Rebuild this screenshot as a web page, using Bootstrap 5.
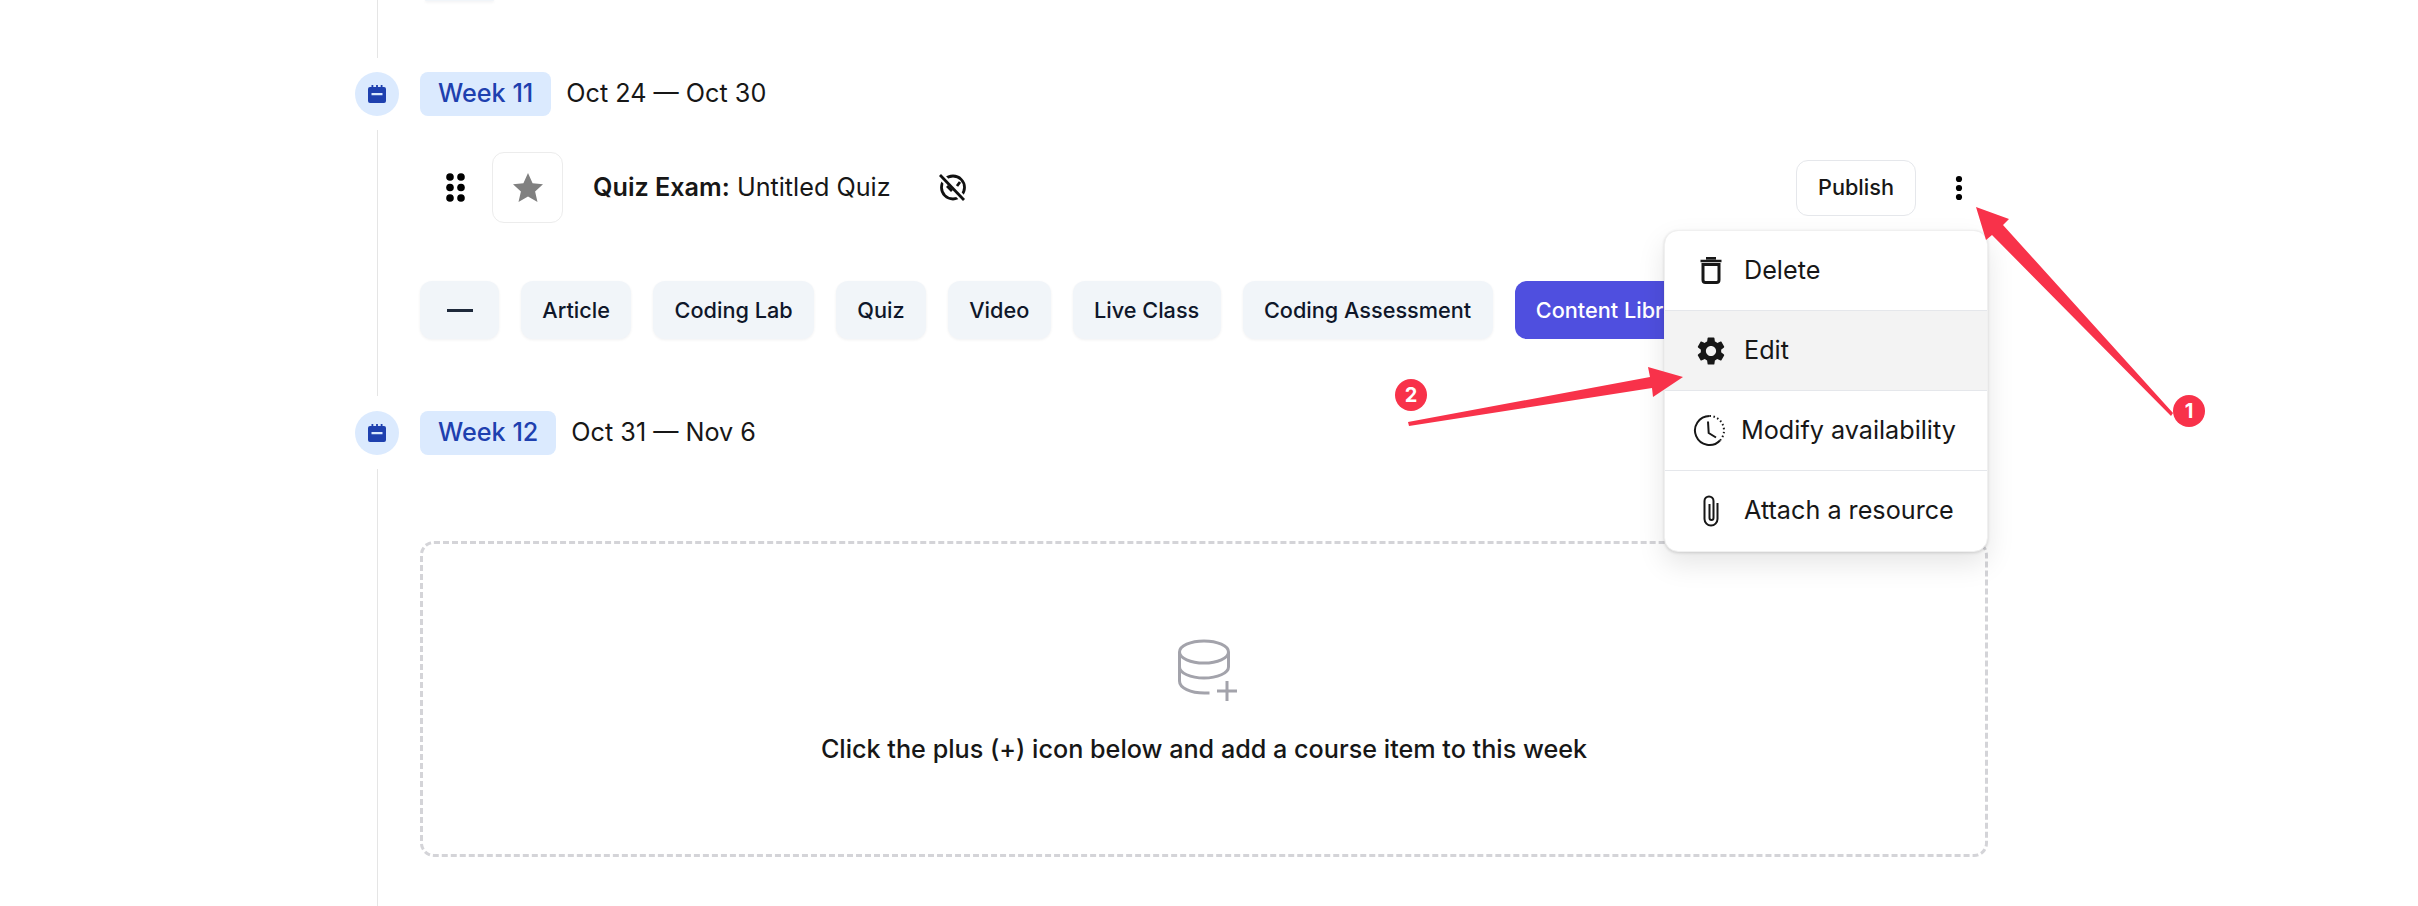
<!DOCTYPE html>
<html lang="en">
<head>
    <meta charset="UTF-8">
    <meta name="viewport" content="width=device-width, initial-scale=1.0">
    <title>Course Timeline</title>

    <!-- Bootstrap CSS -->
    <link href="https://cdn.jsdelivr.net/npm/bootstrap@5.3.0/dist/css/bootstrap.min.css" rel="stylesheet">

    <style>
        html, body {
            height: 906px;
            overflow: hidden;
        }
        body {
            background-color: #ffffff;
            color: #171717;
            font-family: "Inter", "Liberation Sans", sans-serif;
        }
        .page-wrap {
            position: relative;
            width: 2418px;
            height: 906px;
            padding-left: 355px;
        }
        .timeline {
            width: 1633px;
        }
        .rail {
            width: 44px;
            margin-right: 21px;
            flex-shrink: 0;
        }
        .rail-line {
            width: 1px;
            flex-grow: 1;
            background-color: #e5e5e5;
        }
        .intro-line { margin-bottom: 14px; }
        .week-line { margin: 14px 0 15px; }
        .week-line.last-line { margin-bottom: 0; }
        .week-dot {
            width: 44px;
            height: 44px;
            flex-shrink: 0;
            border-radius: 50%;
            background-color: #dbeafe;
            color: #1e40af;
        }
        .intro-block { height: 72px; }
        .week-eleven { height: 339px; }
        .week-twelve { height: 495px; }
        .prev-chip {
            width: 69px;
            height: 1px;
            margin-left: 5px;
            background-color: #f1f5f9;
            box-shadow: 0 1px 3px rgba(15, 23, 42, .12);
        }
        .week-head {
            height: 44px;
            font-size: 25.2px;
        }
        .week-tag {
            height: 44px;
            padding: 0 18px;
            border-radius: 8px;
            background-color: #dbeafe;
            color: #1e40af;
            font-weight: 500;
        }
        .week-date { margin-left: 15px; }
        .quiz-row {
            height: 71px;
            margin-top: 36px;
            padding-left: 26px;
            font-size: 25.2px;
        }
        .grip { margin-right: 27px; }
        .star-box {
            width: 71px;
            height: 71px;
            margin-right: 30px;
            border: 1px solid #ececec;
            border-radius: 12px;
        }
        .quiz-title strong { font-weight: 600; }
        .hidden-mark { margin-left: 48px; }
        .publish-btn {
            height: 56px;
            padding: 0 21px;
            margin-right: 14px;
            background-color: #fff;
            border: 1px solid #e5e7eb;
            border-radius: 12px;
            color: #171717;
            font-size: 21.7px;
            font-weight: 500;
        }
        .kebab-btn {
            width: 58px;
            height: 56px;
            padding: 0;
            background: none;
            border: 0;
        }
        .row-menu {
            top: 70.5px;
            right: 0;
            width: 324px;
            padding: 0;
            overflow: hidden;
            border: 1px solid #f0f0f0;
            border-radius: 14px;
            font-size: 25.2px;
            box-shadow: 0 1px 3px rgba(0, 0, 0, .14), 0 12px 28px rgba(0, 0, 0, .1);
        }
        .row-menu .dropdown-item {
            height: 80px;
            padding: 0;
            color: #171717;
            border-bottom: 1px solid #e5e7eb;
        }
        .row-menu li:last-child .dropdown-item { border-bottom: 0; }
        .row-menu .dropdown-item.active-row { background-color: #f3f3f3; }
        .menu-ico {
            width: 79px;
            padding-left: 13px;
            justify-content: center;
        }
        .menu-ico.narrow {
            width: 76px;
            padding-left: 12px;
        }
        .add-row {
            height: 58px;
            margin-top: 58px;
            font-size: 21.7px;
            gap: 22px;
        }
        .add-chip {
            height: 58px;
            padding: 0 21.3px;
            background-color: #f1f5f9;
            border: 0;
            border-radius: 12px;
            color: #0f172a;
            font-weight: 500;
            white-space: nowrap;
            box-shadow: 0 1px 3px rgba(15, 23, 42, .06);
        }
        .add-chip.dash { width: 79px; padding: 0; }
        .add-chip.lib {
            background-color: #4f4fdf;
            color: #fff;
            box-shadow: none;
        }
        .dash-line {
            width: 26px;
            height: 3px;
            background-color: #1e293b;
        }
        .empty-box {
            height: 316px;
            margin-top: 86px;
            padding-top: 95px;
            border: 3px dashed #d4d4d8;
            border-radius: 14px;
        }
        .empty-icon { margin-left: 10px; }
        .empty-box p {
            margin: 28px 0 0;
            font-size: 25.2px;
            font-weight: 500;
        }
        .arrow-layer {
            position: absolute;
            left: 0;
            top: 0;
            z-index: 1100;
            pointer-events: none;
        }
        .arrow-layer text {
            fill: #fff;
            font-family: "Inter", "Liberation Sans", sans-serif;
            font-size: 20px;
            font-weight: 700;
        }
    </style>
</head>
<body>
    <div class="page-wrap">
        <div class="timeline">

            <!-- Previous week, cut off by the top edge -->
            <section class="d-flex intro-block">
                <div class="rail d-flex flex-column align-items-center">
                    <div class="rail-line intro-line"></div>
                </div>
                <div class="prev-chip rounded-bottom"></div>
            </section>

            <!-- Week 11 -->
            <section class="d-flex week-eleven">
                <div class="rail d-flex flex-column align-items-center">
                    <div class="week-dot d-flex align-items-center justify-content-center">
                        <svg width="18" height="18" viewBox="0 0 18 18"><path fill="currentColor" d="M3.500 0h1.800v2h2.800V0h1.800v2h2.800V0h1.800v2H16a2 2 0 0 1 2 2v2.800H0V4a2 2 0 0 1 2-2h1.500zM0 6.800h18V16a2 2 0 0 1-2 2H2a2 2 0 0 1-2-2zm3.500 1.200v2.200h11V8z"/></svg>
                    </div>
                    <div class="rail-line week-line"></div>
                </div>
                <div class="flex-grow-1">
                    <div class="week-head d-flex align-items-center">
                        <span class="week-tag d-flex align-items-center">Week 11</span>
                        <span class="week-date">Oct 24 — Oct 30</span>
                    </div>

                    <div class="quiz-row d-flex align-items-center">
                        <svg class="grip" width="19" height="29" viewBox="0 0 19 29" fill="#000"><circle cx="4" cy="4" r="3.800"/><circle cx="15" cy="4" r="3.800"/><circle cx="4" cy="14.500" r="3.800"/><circle cx="15" cy="14.500" r="3.800"/><circle cx="4" cy="25" r="3.800"/><circle cx="15" cy="25" r="3.800"/></svg>
                        <div class="star-box d-flex align-items-center justify-content-center">
                            <svg width="30" height="29" viewBox="0 0 30 29"><path fill="#808080" d="M15 0l4.600 10.300 10.400 1-7.900 7.200 2.400 10.500L15 23.500 5.500 29l2.400-10.500L0 11.300l10.400-1z"/></svg>
                        </div>
                        <span class="quiz-title"><strong>Quiz Exam:</strong> Untitled Quiz</span>
                        <svg class="hidden-mark" width="28" height="29" viewBox="0 0 28 29" fill="none" stroke-width="2.800">
                            <circle cx="14" cy="14.500" r="11.500" stroke="#111"/>
                            <path d="M1 2l24 25" stroke="#fff" stroke-width="7"/>
                            <path d="M1 2l24 25" stroke="#111"/>
                            <path d="M18 13l3-4M8 13l5 5" stroke="#111"/>
                        </svg>

                        <button type="button" class="publish-btn ms-auto">Publish</button>
                        <div class="dropdown">
                            <button type="button" class="kebab-btn d-flex align-items-center justify-content-center">
                                <svg width="8" height="26" viewBox="0 0 8 26" fill="#000"><circle cx="4" cy="4" r="3.100"/><circle cx="4" cy="13" r="3.100"/><circle cx="4" cy="22" r="3.100"/></svg>
                            </button>
                            <ul class="dropdown-menu show row-menu">
                                <li><a class="dropdown-item d-flex align-items-center" href="#">
                                    <span class="menu-ico d-flex">
                                        <svg width="22" height="27" viewBox="0 0 22 27" fill="none" stroke="#171717" stroke-width="3"><path d="M3 7.500h16V23a2.500 2.500 0 0 1-2.500 2.500h-11A2.500 2.500 0 0 1 3 23z"/><path d="M.5 4h21M6 1.200h10" stroke-width="2.400"/></svg>
                                    </span>Delete
                                </a></li>
                                <li><a class="dropdown-item active-row d-flex align-items-center" href="#">
                                    <span class="menu-ico d-flex">
                                        <svg width="34" height="34" viewBox="0 0 24 24"><path fill="#171717" d="M19.140 12.940c.04-.3.06-.61.06-.94 0-.32-.02-.64-.07-.94l2.030-1.580c.18-.14.23-.41.12-.61l-1.920-3.320c-.12-.22-.37-.29-.59-.22l-2.390.96c-.5-.38-1.030-.7-1.620-.94l-.36-2.540c-.04-.24-.24-.41-.48-.41h-3.840c-.24 0-.43.17-.47.41l-.36 2.540c-.59.24-1.130.57-1.620.94l-2.390-.96c-.22-.08-.47 0-.59.22L2.740 8.870c-.12.21-.08.47.12.61l2.030 1.580c-.05.3-.09.63-.09.94s.02.64.07.94l-2.030 1.580c-.18.14-.23.41-.12.61l1.920 3.320c.12.22.37.29.59.22l2.390-.96c.5.38 1.030.7 1.620.94l.36 2.540c.05.24.24.41.48.41h3.840c.24 0 .44-.17.47-.41l.36-2.540c.59-.24 1.130-.56 1.620-.94l2.390.96c.22.08.47 0 .59-.22l1.920-3.320c.12-.22.07-.47-.12-.61l-2.010-1.580zM12 15.600c-1.980 0-3.600-1.620-3.600-3.600s1.620-3.600 3.600-3.600 3.600 1.620 3.600 3.600-1.620 3.600-3.600 3.600z"/></svg>
                                    </span>Edit
                                </a></li>
                                <li><a class="dropdown-item d-flex align-items-center" href="#">
                                    <span class="menu-ico narrow d-flex">
                                        <svg width="33" height="33" viewBox="0 0 33 33" fill="none" stroke="#171717" stroke-width="2"><path d="M16.500 2A14.500 14.500 0 1 0 27 26.500"/><path d="M16.500 2A14.500 14.500 0 0 1 27 26.500" stroke-dasharray="1.500 2.500"/><path d="M15 7.500l.7 11.500 7.300 4.500"/></svg>
                                    </span>Modify availability
                                </a></li>
                                <li><a class="dropdown-item d-flex align-items-center" href="#">
                                    <span class="menu-ico d-flex">
                                        <svg width="18" height="32" viewBox="0 0 18 32" fill="none" stroke="#171717" stroke-width="2"><path d="M15.500 8v16a6.500 6.500 0 0 1-13 0V6a4.500 4.500 0 0 1 9 0v17a2 2 0 0 1-4 0V9"/></svg>
                                    </span>Attach a resource
                                </a></li>
                            </ul>
                        </div>
                    </div>

                    <div class="add-row d-flex align-items-center">
                        <button type="button" class="add-chip dash d-flex align-items-center justify-content-center"><span class="dash-line"></span></button>
                        <button type="button" class="add-chip">Article</button>
                        <button type="button" class="add-chip">Coding Lab</button>
                        <button type="button" class="add-chip">Quiz</button>
                        <button type="button" class="add-chip">Video</button>
                        <button type="button" class="add-chip">Live Class</button>
                        <button type="button" class="add-chip">Coding Assessment</button>
                        <button type="button" class="add-chip lib">Content Library</button>
                    </div>
                </div>
            </section>

            <!-- Week 12 -->
            <section class="d-flex week-twelve">
                <div class="rail d-flex flex-column align-items-center">
                    <div class="week-dot d-flex align-items-center justify-content-center">
                        <svg width="18" height="18" viewBox="0 0 18 18"><path fill="currentColor" d="M3.500 0h1.800v2h2.800V0h1.800v2h2.800V0h1.800v2H16a2 2 0 0 1 2 2v2.800H0V4a2 2 0 0 1 2-2h1.500zM0 6.800h18V16a2 2 0 0 1-2 2H2a2 2 0 0 1-2-2zm3.500 1.200v2.200h11V8z"/></svg>
                    </div>
                    <div class="rail-line week-line last-line"></div>
                </div>
                <div class="flex-grow-1">
                    <div class="week-head d-flex align-items-center">
                        <span class="week-tag d-flex align-items-center">Week 12</span>
                        <span class="week-date">Oct 31 — Nov 6</span>
                    </div>
                    <div class="empty-box d-flex flex-column align-items-center">
                        <svg class="empty-icon" width="62" height="64" viewBox="0 0 62 64" fill="none" stroke="#a3a3ab" stroke-width="3"><ellipse cx="26" cy="13" rx="24.500" ry="11"/><path d="M1.500 13v29c0 7 11 12 25 12h5"/><path d="M50.500 13v15c0 6-11 11-24.500 11S1.500 34 1.500 28"/><path d="M39 52h20M49 42v20"/></svg>
                        <p>Click the plus (+) icon below and add a course item to this week</p>
                    </div>
                </div>
            </section>
        </div>

        <!-- Annotation arrows drawn on top of the screenshot -->
        <svg class="arrow-layer" width="2418" height="906" viewBox="0 0 2418 906">
            <path fill="#f8324a" d="M1976 207l33 12-6 6 170 188-2 3-179-181-6 5z"/>
            <circle cx="2189" cy="411" r="16" fill="#f8324a"/>
            <text x="2189" y="418" text-anchor="middle">1</text>
            <path fill="#f8324a" d="M1683 377l-35-10 2 10-242 45 1 4 243-38 1 9z"/>
            <circle cx="1411" cy="395" r="16" fill="#f8324a"/>
            <text x="1411" y="402" text-anchor="middle">2</text>
        </svg>
    </div>

    <!-- Bootstrap JS and Popper -->
    <script src="https://cdn.jsdelivr.net/npm/bootstrap@5.3.0/dist/js/bootstrap.bundle.min.js"></script>
</body>
</html>
